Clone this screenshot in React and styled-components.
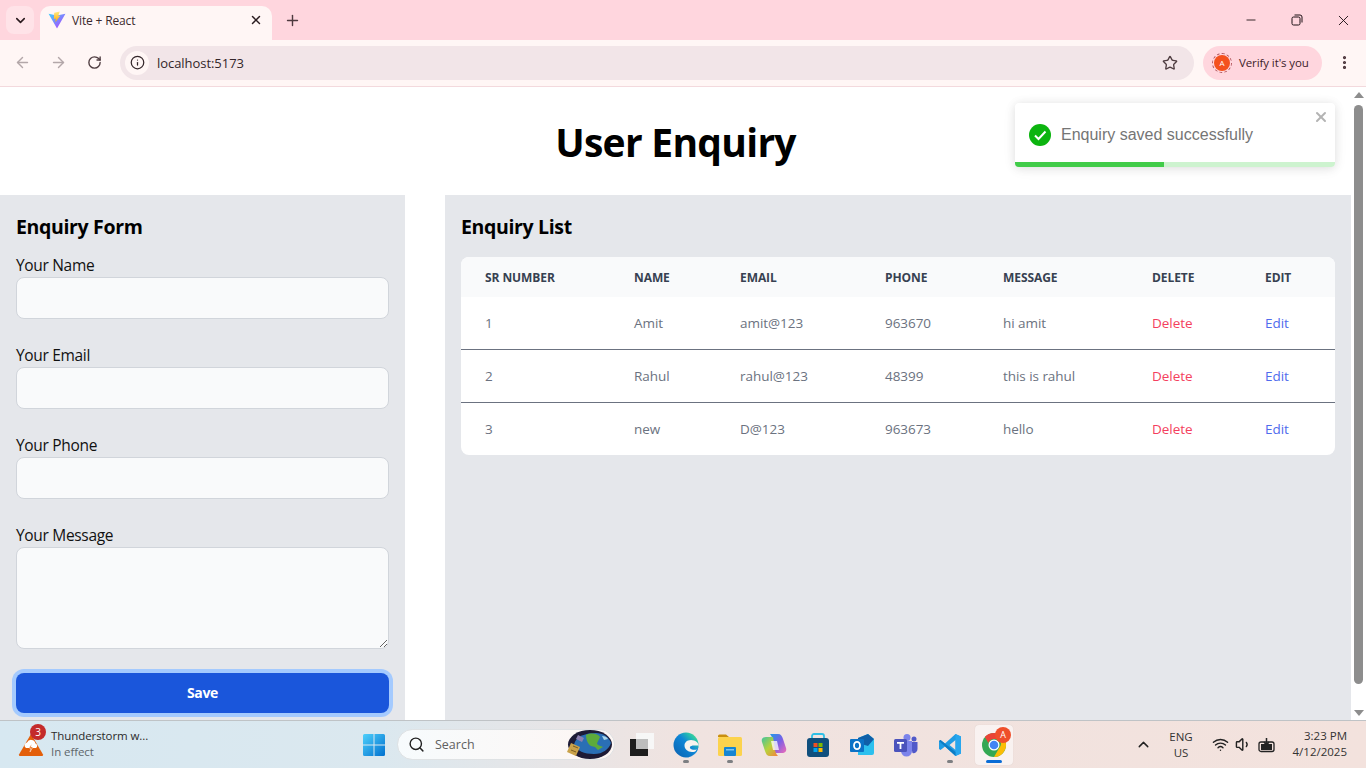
import React from "react";
import styled, { createGlobalStyle } from "styled-components";
import { ArrowLeft, ArrowRight, RotateCw, Info, Star, X, Plus, ChevronDown, ChevronUp, Minus, EllipsisVertical, Search, Wifi, Volume1 } from "lucide-react";

const Global = createGlobalStyle`
  html, body { margin: 0; padding: 0; height: 100%; overflow: hidden; }
  * { box-sizing: border-box; }
  body { font-family: "Open Sans", "Noto Sans", sans-serif; }
`;

const Shell = styled.div`display:flex;flex-direction:column;width:1366px;height:768px;overflow:hidden;background:#fff;`;

const TabStrip = styled.div`height:40px;background:#ffd6de;display:flex;align-items:flex-end;padding-left:6px;flex-shrink:0;`;
const TabMenu = styled.div`width:28px;height:28px;margin:0 6px 6px 0;border-radius:8px;background:#ffe3e8;display:flex;align-items:center;justify-content:center;color:#2a1a1e;`;
const Tab = styled.div`width:232px;height:34px;background:#fff6f5;border-radius:10px 10px 0 0;display:flex;align-items:center;padding:0 9px 6px 8px;color:#3c2a2e;gap:6px;`;
const TabTitle = styled.span`flex:1;font-size:12px;letter-spacing:-.15px;`;
const NewTab = styled.div`margin:0 0 6px 6px;height:28px;width:28px;display:flex;align-items:center;justify-content:center;color:#4e3a3f;`;
const WinButtons = styled.div`margin-left:auto;display:flex;align-self:flex-start;height:40px;align-items:center;`;
const WinBtn = styled.div`width:46px;display:flex;justify-content:center;align-items:center;color:#1c1014;`;

const Toolbar = styled.div`height:47px;background:#fff6f5;border-bottom:1px solid #f3d9dd;display:flex;align-items:center;padding:0 4px 1px 4px;flex-shrink:0;`;
const Nav = styled.div`width:36px;flex-shrink:0;display:flex;justify-content:center;color:${p => p.$on ? "#4f3d41" : "#b3a7a9"};`;
const Omni = styled.div`width:1074px;flex-shrink:0;margin-left:8px;height:34px;border-radius:17px;background:#f2e5e8;display:flex;align-items:center;padding:0 16px 0 5px;font-size:13px;color:#33262a;letter-spacing:-.05px;`;
const InfoBadge = styled.div`width:24px;height:24px;border-radius:50%;background:#fff6f5;display:flex;align-items:center;justify-content:center;margin-right:8px;color:#33262a;`;
const OmniText = styled.span`flex:1;`;
const Verify = styled.div`flex-shrink:0;margin-left:9px;height:34px;width:119px;border-radius:17px;background:#ffd6de;display:flex;align-items:center;padding-left:11px;gap:9px;font-size:11.5px;color:#3d2229;letter-spacing:-.1px;white-space:nowrap;`;
const Avatar = styled.div`width:16px;height:16px;border-radius:50%;background:#f4511e;color:#fff;font-size:8px;display:flex;align-items:center;justify-content:center;outline:1px dashed #b0525a;outline-offset:1.5px;`;
const Kebab = styled.div`flex-shrink:0;margin-left:4px;width:36px;display:flex;justify-content:center;color:#4a3238;`;

const Viewport = styled.div`flex:1;min-height:0;display:flex;position:relative;overflow:hidden;`;
const Page = styled.main`flex:1;min-width:0;display:flex;flex-direction:column;background:#fff;overflow:hidden;`;
const Title = styled.h1`margin:0;height:108px;padding-top:27px;text-align:center;font-size:39px;line-height:56px;font-weight:700;color:#000;letter-spacing:-.72px;`;
const Columns = styled.div`flex:1;display:grid;grid-template-columns:405px 906px;column-gap:40px;min-height:0;`;
const Panel = styled.section`background:#e5e7eb;padding:16px;overflow:hidden;`;
const Heading = styled.h2`margin:0 0 ${p => p.$gap}px;font-size:19.5px;line-height:32px;font-weight:700;color:#000;letter-spacing:-.35px;`;
const Field = styled.div`margin-bottom:24px;`;
const Label = styled.label`display:block;font-size:15.5px;line-height:24px;color:#111;letter-spacing:-.32px;`;
const Input = styled.input`display:block;width:373px;height:42px;border:1px solid #d1d5db;border-radius:8px;background:#f9fafb;`;
const Area = styled.textarea`display:block;width:373px;height:102px;border:1px solid #d1d5db;border-radius:8px;background:#f9fafb;resize:vertical;`;
const Save = styled.button`display:block;width:373px;height:40px;background:#1a56db;border:0;border-radius:8px;color:#fff;font:700 14px/20px "Open Sans",sans-serif;letter-spacing:-.3px;box-shadow:0 0 0 4px #a4cafe;`;

const Card = styled.table`width:874px;border-collapse:separate;border-spacing:0;table-layout:fixed;border-radius:8px;overflow:hidden;background:#fff;`;
const Th = styled.th`height:40px;background:#f9fafb;padding:0 0 0 24px;text-align:left;font-size:12px;font-weight:700;text-transform:uppercase;color:#374151;letter-spacing:-.08px;`;
const Td = styled.td`height:${p => p.$last ? 52 : 53}px;padding:0 0 0 24px;font-size:13.5px;color:${p => p.$c || "#6b7280"};border-bottom:${p => p.$last ? "0" : "1px solid #6b7280"};letter-spacing:-.05px;`;

const Toast = styled.div`position:absolute;top:16px;right:31px;width:320px;height:64px;background:#fff;border-radius:4px;box-shadow:0 1px 10px rgba(0,0,0,.1),0 2px 15px rgba(0,0,0,.05);overflow:hidden;display:flex;align-items:center;padding:0 0 0 14px;gap:10px;`;
const ToastText = styled.span`font-family:"Liberation Sans",sans-serif;font-size:16px;color:#757575;`;
const ToastClose = styled.div`position:absolute;top:6px;right:6px;color:#b3b3b3;display:flex;`;
const Track = styled.div`position:absolute;left:0;right:0;bottom:0;height:5px;background:#cdf3cf;`;
const Fill = styled.div`height:100%;background:#41cc49;`;

const Scrollbar = styled.div`width:15px;background:#fff;display:flex;flex-direction:column;align-items:center;padding-top:5px;`;
const Thumb = styled.div`width:9px;height:579px;margin-top:7px;border-radius:5px;background:#8d8d8d;`;
const ArrowUp = styled.div`width:0;height:0;border-left:5px solid transparent;border-right:5px solid transparent;border-bottom:6px solid #8d8d8d;`;
const ArrowDown = styled.div`width:0;height:0;border-left:5px solid transparent;border-right:5px solid transparent;border-top:6px solid #8d8d8d;margin-top:auto;margin-bottom:4px;`;

const Taskbar = styled.footer`height:48px;flex-shrink:0;border-top:1px solid #bfc3c6;background:linear-gradient(90deg,#d7e8f1 0%,#dbe8ef 28%,#f0e3e0 50%,#f3e2dd 100%);display:flex;align-items:center;position:relative;`;
const Weather = styled.div`width:362px;display:flex;align-items:center;padding-left:18px;gap:7px;position:relative;`;
const WeatherBadge = styled.span`position:absolute;left:30px;top:-4px;width:16px;height:16px;border-radius:50%;background:#c42b2b;color:#fff;font-size:10px;display:flex;align-items:center;justify-content:center;`;
const WeatherText = styled.div`font-size:11.5px;line-height:16px;color:#2b2b2b;letter-spacing:-.08px;padding-bottom:2px;`;
const Muted = styled.div`color:#5e666b;`;
const SearchBox = styled.div`width:218px;height:31px;margin-left:11px;border-radius:16px;background:linear-gradient(90deg,#f7fbfd,#fdf6f3);border:1px solid #dfe2e4;display:flex;align-items:center;padding-left:10px;gap:10px;font-size:12.5px;color:#5f6060;overflow:hidden;`;
const SearchGlobe = styled.svg`margin-left:auto;flex-shrink:0;`;
const Icons = styled.div`display:flex;align-items:center;margin-left:5px;`;
const IconSlot = styled.div`width:44px;height:40px;display:flex;align-items:center;justify-content:center;position:relative;`;
const ActiveSlot = styled(IconSlot)`width:38px;margin-left:3px;border-radius:4px;background:rgba(255,255,255,.55);box-shadow:0 0 1px rgba(0,0,0,.15);`;
const Dot = styled.span`position:absolute;bottom:2px;left:50%;margin-left:${p => p.$active ? -8 : -3}px;width:${p => p.$active ? 16 : 6}px;height:3px;border-radius:2px;background:${p => p.$active ? "#0a6cd6" : "#7d7f82"};`;
const ABadge = styled.span`position:absolute;top:2px;right:2px;width:16px;height:16px;border-radius:50%;background:#ef4f2b;color:#fff;font-size:9px;display:flex;align-items:center;justify-content:center;`;
const Tray = styled.div`margin-left:auto;display:flex;align-items:center;color:#222;`;
const Lang = styled.div`width:40px;margin-left:9px;text-align:center;font-size:11.5px;line-height:16px;color:#333;`;
const TrayIcons = styled.div`display:flex;align-items:center;gap:6px;margin-left:11px;`;
const Clock = styled.div`width:80px;margin-left:10px;padding:0 19px 2px 0;text-align:right;font-size:11.5px;line-height:16px;color:#333;`;

const ViteLogo = () => (
  <svg width="18" height="18" viewBox="0 0 32 32" aria-hidden="true">
    <defs>
      <linearGradient id="va" x1="0" y1="0" x2="1" y2="1"><stop offset="0" stopColor="#41d1ff" /><stop offset="1" stopColor="#bd34fe" /></linearGradient>
      <linearGradient id="vb" x1="0" y1="0" x2="0" y2="1"><stop offset="0" stopColor="#ffea83" /><stop offset="1" stopColor="#ffa800" /></linearGradient>
    </defs>
    <path d="M1 5 L16 8 L31 5 L16.500 30 Q16 31 15.500 30 Z" fill="url(#va)" />
    <path d="M21 1 L11 3 L10.500 14 L14 13.500 L13 20 L22 8 L18 9 Z" fill="url(#vb)" />
  </svg>
);
const Restore = () => (
  <svg width="12" height="12" viewBox="0 0 12 12" fill="none" stroke="currentColor"><rect x="1" y="3" width="8" height="8" rx="1.500" /><path d="M3.500 1h5.500a2 2 0 0 1 2 2v5.500" /></svg>
);
const Check = () => (
  <svg width="22" height="22" viewBox="0 0 22 22" aria-hidden="true"><circle cx="11" cy="11" r="11" fill="#0cb40f" /><path d="M6 11.500l3.500 3.500 7-7.500" stroke="#fff" strokeWidth="2" fill="none" /></svg>
);
const Alert = () => (
  <svg width="26" height="24" viewBox="0 0 26 24" aria-hidden="true"><path d="M13 1 L25 21.500 Q25.300 23 24 23 H2 Q.7 23 1 21.500Z" fill="#e35f0a" /><path d="M8 15a3 3 0 0 1 1-5.500 4.500 4.500 0 0 1 8.500 1 2.500 2.500 0 0 1 .5 4.500Z" fill="#fff" /><path d="M13.500 11l-2.500 4h2l-1 4 3-5h-2z" fill="#e35f0a" stroke="#fff" strokeWidth=".5" /></svg>
);
const WinLogo = () => (
  <svg width="24" height="24" viewBox="0 0 24 24" aria-hidden="true">
    <defs><linearGradient id="wl" x1="0" y1="0" x2="1" y2="1"><stop offset="0" stopColor="#4fd0fb" /><stop offset="1" stopColor="#0070cf" /></linearGradient></defs>
    <path d="M1 2.500A1.500 1.500 0 0 1 2.500 1H11.500V11.500H1ZM12.500 1H21.500A1.500 1.500 0 0 1 23 2.500V11.500H12.500ZM1 12.500H11.500V23H2.500A1.500 1.500 0 0 1 1 21.500ZM12.500 12.500H23V21.500A1.500 1.500 0 0 1 21.500 23H12.500Z" fill="url(#wl)" />
  </svg>
);
const Globe = () => (
  <SearchGlobe width="48" height="29" viewBox="0 0 48 29" aria-hidden="true">
    <ellipse cx="24" cy="14.500" rx="22" ry="14.500" fill="#1d1b36" />
    <path d="M8 14.500C10 6 20 3 30 3c7 0 13 4 15 10-2 6-8 11-17 11C18 24 11 21 8 14.500Z" fill="#2a6fb5" />
    <path d="M20 5c6-3 12-1 14 2-1 3-3 5-3 7 2 2 5 2 6 3l-5 3-3-3-4-1c-3-2-5-6-5-11Z" fill="#5dab3c" />
    <path d="M36 6c3 0 5 1 6 3l-4 1Z" fill="#a9d5ea" />
    <path d="M12 5l6 3-2 4-6-3Z" fill="#8b7fb0" />
    <path d="M5 13l9 4-4 9-9-4Z" fill="#c9a24a" />
    <path d="M7 16l5 2M5 20l5 2" stroke="#7a5f22" />
  </SearchGlobe>
);
const TaskView = () => (
  <svg width="24" height="24" viewBox="0 0 24 24" aria-hidden="true"><rect x="6" y="0" width="18" height="16" fill="#f7f7f7" /><rect x="0" y="6" width="18" height="17" fill="#1d1d1d" /><rect x="6" y="6" width="12" height="10" fill="#bdbdbd" /></svg>
);
const Edge = () => (
  <svg width="26" height="26" viewBox="0 0 26 26" aria-hidden="true">
    <defs>
      <linearGradient id="eg" x1="0" y1="1" x2="1" y2="0"><stop offset="0" stopColor="#0b5fae" /><stop offset=".55" stopColor="#0f86d6" /><stop offset=".8" stopColor="#2cc7a8" /><stop offset="1" stopColor="#62dc7a" /></linearGradient>
    </defs>
    <circle cx="13" cy="13" r="12.500" fill="url(#eg)" />
    <path d="M25.500 13c0-2-3-5-7.500-5-4.500 0-6.500 3-6.500 5.500 0 3.500 3 6.500 7.500 6.500 2 0 3.500-.5 4.500-1.500l1-1.500c-2 1-4 1-5.500.5-1.500-.5-2.500-1.500-2-2.500.5-1 2-1.500 4-1.500 2 0 3.500 0 4.500 0Z" fill="#f7f3ee" />
    <path d="M25.500 14c-.5 6-5 11-12 11.500 4 0 8-2 9.500-7Z" fill="#1f8fd8" />
  </svg>
);
const Folder = () => (
  <svg width="26" height="24" viewBox="0 0 26 24" aria-hidden="true"><path d="M1 3a1.500 1.500 0 0 1 1.500-1.500H9l3 2.500H1Z" fill="#c98f10" /><rect x="1" y="4" width="24" height="19" rx="1.500" fill="#fcd34d" /><rect x="7" y="14" width="12" height="9" rx="1" fill="#1585d2" /><rect x="9" y="16" width="8" height="1.500" fill="#7cc5ef" /></svg>
);
const Copilot = () => (
  <svg width="26" height="24" viewBox="0 0 26 24" aria-hidden="true">
    <defs>
      <linearGradient id="cp" x1="0" y1="0" x2="1" y2="1"><stop offset="0" stopColor="#1f9be8" /><stop offset=".5" stopColor="#7a5fe6" /><stop offset="1" stopColor="#f06cb6" /></linearGradient>
      <linearGradient id="cq" x1="0" y1="0" x2="1" y2="1"><stop offset="0" stopColor="#3fc4a0" /><stop offset=".5" stopColor="#b8d23c" /><stop offset="1" stopColor="#f5803a" /></linearGradient>
    </defs>
    <path d="M9 1h8c3 0 4 2 5 5l3 9c1 3-1 5-4 5h-7L12 7C11 4 10 2 9 1Z" fill="url(#cp)" />
    <path d="M17 23H9c-3 0-4-2-5-5L1 9c-1-3 1-5 4-5h7l2 13c.5 3 2 5 3 6Z" fill="url(#cq)" />
    <path d="M10 8h6l2 9h-6Z" fill="#fff" opacity=".75" />
  </svg>
);
const Store = () => (
  <svg width="24" height="24" viewBox="0 0 24 24" aria-hidden="true"><path d="M6 6V3a2 2 0 0 1 2-2h8a2 2 0 0 1 2 2v3" fill="none" stroke="#2ebfe6" strokeWidth="1.800" /><rect x="1" y="5" width="22" height="19" rx="3" fill="#104f7d" /><rect x="7.500" y="10" width="4" height="4" fill="#f25022" /><rect x="12.500" y="10" width="4" height="4" fill="#7fba00" /><rect x="7.500" y="15" width="4" height="4" fill="#00a4ef" /><rect x="12.500" y="15" width="4" height="4" fill="#ffb900" /></svg>
);
const Outlook = () => (
  <svg width="26" height="24" viewBox="0 0 26 24" aria-hidden="true"><path d="M9 5 19 1l6 5v14a2 2 0 0 1-2 2H9Z" fill="#2cc0ee" /><path d="M9 5 19 1l6 5-6 7-10-3Z" fill="#0f5fa8" /><rect x="1" y="6" width="14" height="13" rx="1" fill="#0b72c6" /><ellipse cx="8" cy="12.500" rx="3" ry="3.700" fill="none" stroke="#fff" strokeWidth="1.800" /></svg>
);
const Teams = () => (
  <svg width="26" height="24" viewBox="0 0 26 24" aria-hidden="true"><circle cx="14" cy="4.500" r="3.500" fill="#7b83eb" /><circle cx="21" cy="6" r="2.500" fill="#5059c9" /><path d="M17 9h7.500v7a4 4 0 0 1-5 4Z" fill="#5059c9" /><path d="M8 8h11v10a5 5 0 0 1-11 0Z" fill="#7b83eb" /><rect x="1" y="6" width="13" height="13" rx="1.500" fill="#4b53bc" /><path d="M4 9h7v1.800H8.400V16H6.600v-5.200H4Z" fill="#fff" /></svg>
);
const VSCode = () => (
  <svg width="24" height="24" viewBox="0 0 24 24" aria-hidden="true"><path d="M17.500 1 23 3.500v17L17.500 23 7 13.500 2.500 17 1 16V8l1.500-1L7 10.500ZM17.500 7l-6 5 6 5Z" fill="#1f9ce4" /><path d="M17.500 1 23 3.500v17L17.500 23Z" fill="#27a6ee" /><path d="M1 8l1.500-1 15 12v4Z" fill="#0d7cc5" /></svg>
);
const Chrome = () => (
  <svg width="26" height="26" viewBox="0 0 26 26" aria-hidden="true"><circle cx="13" cy="13" r="12" fill="#34a853" /><path d="M13 1a12 12 0 0 1 10.400 6H13a6 6 0 0 0-5.600 4L3.800 5A12 12 0 0 1 13 1Z" fill="#ea4335" /><path d="M23.400 7A12 12 0 0 1 13 25l5.200-9a6 6 0 0 0-.5-9Z" fill="#fbbc05" /><circle cx="13" cy="13" r="5.500" fill="#fff" /><circle cx="13" cy="13" r="4.300" fill="#4285f4" /></svg>
);
const Battery = () => (
  <svg width="18" height="16" viewBox="0 0 18 16" aria-hidden="true"><rect x="1" y="5" width="15" height="9.500" rx="2" fill="none" stroke="#222" strokeWidth="1.300" /><path d="M3 7h11v6H3Z" fill="#222" /><path d="M8.500 1v6M6 5l2.500 3L11 5" stroke="#222" strokeWidth="1.500" fill="none" /></svg>
);

const rows = [
  ["1", "Amit", "amit@123", "963670", "hi amit"],
  ["2", "Rahul", "rahul@123", "48399", "this is rahul"],
  ["3", "new", "D@123", "963673", "hello"],
];
const widths = [149, 106, 145, 118, 149, 113, 94];
const heads = ["Sr Number", "Name", "Email", "Phone", "Message", "Delete", "Edit"];
const fields = ["Your Name", "Your Email", "Your Phone"];
const apps = [
  [<TaskView key="t" />, false], [<Edge key="e" />, true], [<Folder key="f" />, true], [<Copilot key="c" />, false],
  [<Store key="s" />, false], [<Outlook key="o" />, false], [<Teams key="te" />, false], [<VSCode key="v" />, true],
];

export default function App() {
  return (
    <Shell>
      <Global />
      <TabStrip>
        <TabMenu><ChevronDown size={15} strokeWidth={2.500} /></TabMenu>
        <Tab>
          <ViteLogo />
          <TabTitle>Vite + React</TabTitle>
          <X size={14} strokeWidth={2.500} color="#2a1c20" />
        </Tab>
        <NewTab><Plus size={17} strokeWidth={2} /></NewTab>
        <WinButtons>
          <WinBtn><Minus size={14} strokeWidth={1.500} /></WinBtn>
          <WinBtn><Restore /></WinBtn>
          <WinBtn><X size={17} strokeWidth={1.300} /></WinBtn>
        </WinButtons>
      </TabStrip>
      <Toolbar>
        <Nav><ArrowLeft size={17} /></Nav>
        <Nav><ArrowRight size={17} /></Nav>
        <Nav $on><RotateCw size={15} strokeWidth={2.200} /></Nav>
        <Omni>
          <InfoBadge><Info size={15} /></InfoBadge>
          <OmniText>localhost:5173</OmniText>
          <Star size={16} strokeWidth={2} color="#4f3d41" />
        </Omni>
        <Verify><Avatar>A</Avatar>Verify it's you</Verify>
        <Kebab><EllipsisVertical size={17} strokeWidth={2.500} /></Kebab>
      </Toolbar>
      <Viewport>
        <Page>
          <Title>User Enquiry</Title>
          <Columns>
            <Panel>
              <Heading $gap={10}>Enquiry Form</Heading>
              {fields.map(l => (
                <Field key={l}><Label>{l}</Label><Input /></Field>
              ))}
              <Field><Label>Your Message</Label><Area /></Field>
              <Save>Save</Save>
            </Panel>
            <Panel>
              <Heading $gap={14}>Enquiry List</Heading>
              <Card>
                <colgroup>{widths.map((w, i) => <col key={i} width={w} />)}</colgroup>
                <thead><tr>{heads.map(h => <Th key={h}>{h}</Th>)}</tr></thead>
                <tbody>
                  {rows.map((r, i) => (
                    <tr key={r[0]}>
                      {r.map((c, j) => <Td key={j} $last={i === 2}>{c}</Td>)}
                      <Td $last={i === 2} $c="#f43f5e">Delete</Td>
                      <Td $last={i === 2} $c="#4f6bed">Edit</Td>
                    </tr>
                  ))}
                </tbody>
              </Card>
            </Panel>
          </Columns>
        </Page>
        <Scrollbar>
          <ArrowUp />
          <Thumb />
          <ArrowDown />
        </Scrollbar>
        <Toast>
          <Check />
          <ToastText>Enquiry saved successfully</ToastText>
          <ToastClose><X size={16} strokeWidth={3} /></ToastClose>
          <Track><Fill style={{ width: "46.700%" }} /></Track>
        </Toast>
      </Viewport>
      <Taskbar>
        <Weather>
          <Alert />
          <WeatherBadge>3</WeatherBadge>
          <WeatherText>Thunderstorm w...<Muted>In effect</Muted></WeatherText>
        </Weather>
        <WinLogo />
        <SearchBox><Search size={17} color="#222" />Search<Globe /></SearchBox>
        <Icons>
          {apps.map(([icon, running], i) => (
            <IconSlot key={i}>{icon}{running && <Dot />}</IconSlot>
          ))}
          <ActiveSlot><Chrome /><ABadge>A</ABadge><Dot $active /></ActiveSlot>
        </Icons>
        <Tray>
          <ChevronUp size={17} />
          <Lang>ENG<br />US</Lang>
          <TrayIcons><Wifi size={17} /><Volume1 size={17} /><Battery /></TrayIcons>
          <Clock>3:23 PM<br />4/12/2025</Clock>
        </Tray>
      </Taskbar>
    </Shell>
  );
}
